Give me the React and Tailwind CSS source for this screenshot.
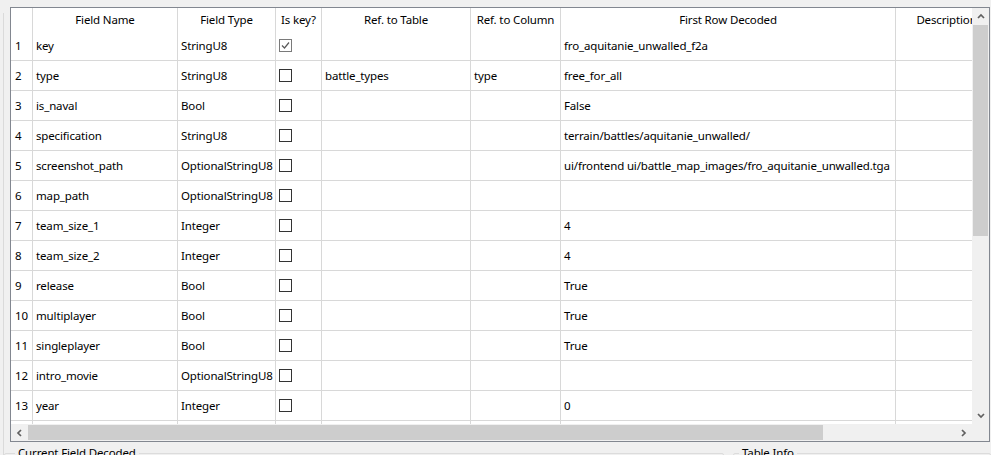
import React from 'react'

const rows = [
  [1, 'key', 'StringU8', true, '', '', 'fro_aquitanie_unwalled_f2a'],
  [2, 'type', 'StringU8', false, 'battle_types', 'type', 'free_for_all'],
  [3, 'is_naval', 'Bool', false, '', '', 'False'],
  [4, 'specification', 'StringU8', false, '', '', 'terrain/battles/aquitanie_unwalled/'],
  [5, 'screenshot_path', 'OptionalStringU8', false, '', '', 'ui/frontend ui/battle_map_images/fro_aquitanie_unwalled.tga'],
  [6, 'map_path', 'OptionalStringU8', false, '', '', ''],
  [7, 'team_size_1', 'Integer', false, '', '', '4'],
  [8, 'team_size_2', 'Integer', false, '', '', '4'],
  [9, 'release', 'Bool', false, '', '', 'True'],
  [10, 'multiplayer', 'Bool', false, '', '', 'True'],
  [11, 'singleplayer', 'Bool', false, '', '', 'True'],
  [12, 'intro_movie', 'OptionalStringU8', false, '', '', ''],
  [13, 'year', 'Integer', false, '', '', '0'],
  [14, '', '', false, '', '', ''],
]

const Chevron = ({ dir }) => {
  const pts = {
    up: '1,5 4,2 7,5',
    down: '1,2 4,5 7,2',
    left: '5,1 2,4 5,7',
    right: '2,1 5,4 2,7',
  }[dir]
  const vertical = dir === 'up' || dir === 'down'
  return (
    <svg width={vertical ? 8 : 7} height={vertical ? 7 : 8} viewBox={vertical ? '0 0 8 7' : '0 0 7 8'}>
      <polyline points={pts} fill="none" stroke="#606060" strokeWidth="1.7" />
    </svg>
  )
}

const CheckBox = ({ checked }) =>
  checked ? (
    <div className="w-[13px] h-[13px] border border-[#7a7a7a] bg-white flex items-center justify-center">
      <svg width="11" height="11" viewBox="0 0 11 11">
        <polyline points="2,5.5 4.5,8 9,2.5" fill="none" stroke="#5a5a5a" strokeWidth="1.2" />
      </svg>
    </div>
  ) : (
    <div className="w-[13px] h-[13px] border border-[#333333] bg-white" />
  )

const cell = 'shrink-0 border-r border-[#d8d8d8] h-full flex items-center overflow-hidden whitespace-nowrap'

const App = () => {
  return (
    <div className="w-[991px] h-[455px] bg-[#f0f0f0] overflow-hidden flex font-['Noto_Sans',sans-serif] text-[11.5px] tracking-[-0.15px] text-black">
      <div className="w-[3px] shrink-0" />
      <div className="w-px shrink-0 bg-[#dadada] mt-[13px]" />
      <div className="flex flex-col">
        {/* Table frame */}
        <div className="ml-[6px] mt-[7px] w-[980px] h-[435px] border border-[#828790] flex flex-col">
          <div className="flex h-[416px]">
            {/* viewport */}
            <div className="w-[961px] h-[416px] bg-white overflow-hidden">
              <div className="flex h-[23px] w-[1100px]">
                <div className={`${cell} w-[22px]`} />
                <div className={`${cell} w-[145px] justify-center`}>Field Name</div>
                <div className={`${cell} w-[98px] justify-center`}>Field Type</div>
                <div className={`${cell} w-[46px] justify-center`}>Is key?</div>
                <div className={`${cell} w-[149px] justify-center`}>Ref. to Table</div>
                <div className={`${cell} w-[90px] justify-center`}>Ref. to Column</div>
                <div className={`${cell} w-[335px] justify-center`}>First Row Decoded</div>
                <div className={`${cell} w-[102px] justify-center`}>Description</div>
              </div>
              {rows.map((r) => (
                <div key={r[0]} className="flex h-[30px] w-[1100px] border-b border-[#d8d8d8]">
                  <div className={`${cell} w-[22px] pl-[4px]`}>{r[1] ? r[0] : ''}</div>
                  <div className={`${cell} w-[145px] pl-[3px]`}>{r[1]}</div>
                  <div className={`${cell} w-[98px] pl-[3px]`}>{r[2]}</div>
                  <div className={`${cell} w-[46px] pl-[3px]`}>
                    {r[1] && <CheckBox checked={r[3]} />}
                  </div>
                  <div className={`${cell} w-[149px] pl-[3px]`}>{r[4]}</div>
                  <div className={`${cell} w-[90px] pl-[3px]`}>{r[5]}</div>
                  <div className={`${cell} w-[335px] pl-[3px]`}>{r[6]}</div>
                  <div className={`${cell} w-[102px]`} />
                </div>
              ))}
            </div>
            {/* vertical scrollbar */}
            <div className="w-[17px] flex flex-col bg-[#f0f0f0]">
              <div className="h-[17px] flex items-center justify-center">
                <Chevron dir="up" />
              </div>
              <div className="h-[211px] mx-px bg-[#cdcdcd]" />
              <div className="flex-1" />
              <div className="h-[17px] flex items-center justify-center">
                <Chevron dir="down" />
              </div>
            </div>
          </div>
          {/* horizontal scrollbar */}
          <div className="flex h-[17px] bg-[#f0f0f0]">
            <div className="w-[17px] flex items-center justify-center">
              <Chevron dir="left" />
            </div>
            <div className="w-[795px] my-px bg-[#cdcdcd]" />
            <div className="flex-1" />
            <div className="w-[17px] flex items-center justify-center">
              <Chevron dir="right" />
            </div>
            <div className="w-[17px]" />
          </div>
        </div>
        {/* group boxes */}
        <div className="flex mt-[3px] gap-[9px]">
          <fieldset className="w-[720px] h-[40px] border border-[#dcdcdc] rounded-[2px]">
            <legend className="ml-[10px] px-[3px] leading-[16px]">Current Field Decoded</legend>
          </fieldset>
          <fieldset className="w-[258px] h-[40px] border border-[#dcdcdc] rounded-[2px]">
            <legend className="ml-[5px] px-[3px] leading-[16px]">Table Info</legend>
          </fieldset>
        </div>
      </div>
    </div>
  )
}

export default App
